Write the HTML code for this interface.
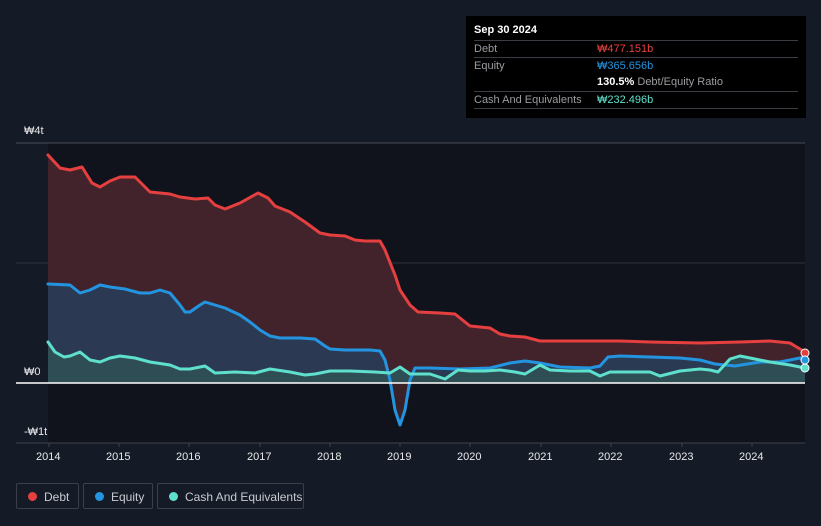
<!DOCTYPE html>
<html><head><meta charset="utf-8"><style>
body{margin:0;width:821px;height:526px;background:#151b26;font-family:"Liberation Sans","Noto Sans CJK KR",sans-serif;overflow:hidden;position:relative}
.tt{position:absolute;left:466px;top:16px;width:340px;height:102px;background:#000;}
.tt .h{position:absolute;left:8px;top:8px;color:#fff;font-size:11px;font-weight:bold}
.row{position:absolute;left:8px;width:324px;border-top:1px solid #3a3d44;font-size:11px;color:#9a9ca0;height:17px;line-height:17px}
.row span{position:absolute;left:123px}
.leg{position:absolute;top:483px;height:26px;border:1px solid #3a3f4a;border-radius:2px;color:#c8cad0;font-size:12px;line-height:26px;box-sizing:border-box}
.leg i{position:absolute;left:11px;top:8px;width:9px;height:9px;border-radius:50%}
.leg b{font-weight:normal;position:absolute;left:27px}
.ax{position:absolute;color:#e8e8ea;font-size:11px}
</style></head><body>
<svg width="821" height="526" style="position:absolute;left:0;top:0">
<rect x="48" y="143" width="757" height="300" fill="#10131b"/>
<line x1="16" y1="143" x2="805" y2="143" stroke="#4a4e57"/>
<line x1="16" y1="263" x2="805" y2="263" stroke="#2e323a"/>
<line x1="16" y1="443" x2="805" y2="443" stroke="#3e424b"/>
<g stroke="#3e424b"><line x1="49" y1="443" x2="49" y2="447"/><line x1="119" y1="443" x2="119" y2="447"/><line x1="189" y1="443" x2="189" y2="447"/><line x1="260" y1="443" x2="260" y2="447"/><line x1="330" y1="443" x2="330" y2="447"/><line x1="400" y1="443" x2="400" y2="447"/><line x1="470" y1="443" x2="470" y2="447"/><line x1="541" y1="443" x2="541" y2="447"/><line x1="611" y1="443" x2="611" y2="447"/><line x1="682" y1="443" x2="682" y2="447"/><line x1="752" y1="443" x2="752" y2="447"/></g>
<polygon fill="#43232b" points="48,155 60,168 70,170 82,167 92,183 100,187 110,181 120,177 135,177 150,192 170,194 180,197 195,199 208,198 215,205 225,209 240,203 258,193 268,198 275,206 290,212 305,222 320,233 330,235 345,236 355,240 365,241 380,241 385,250 395,275 400,290 410,305 418,312 440,313 455,314 470,326 480,327 490,328 500,334 510,336 525,337 540,341 560,341 600,341 620,341 650,342 700,343 740,342 770,341 790,343 805,352 805,383 48,383"/>
<polygon fill="#3a2128" points="385,383 390,383 395,410 400,425 405,410 410,383"/>
<polygon fill="#2b3a52" points="48,284 70,285 80,293 90,290 100,285 110,287 125,289 140,293 150,293 160,290 170,293 180,305 185,312 190,312 200,305 205,302 215,305 225,308 240,315 250,322 260,330 270,336 280,338 300,338 315,339 325,346 330,349 345,350 370,350 380,351 385,360 388,383 48,383"/>
<polygon fill="#2a3a52" points="412,383 415,368 430,368 460,369 490,368 510,363 525,361 540,363 560,367 590,368 600,366 608,357 620,356 650,357 680,358 700,360 715,364 735,366 760,362 780,362 805,357 805,383"/>
<polygon fill="#2f4d55" points="48,342 55,352 64,357 70,356 80,352 90,360 100,362 110,358 120,356 135,358 150,362 170,365 180,369 190,369 205,366 215,373 235,372 255,373 270,369 290,372 305,375 315,374 330,371 350,371 375,372 390,373 400,367 410,374 430,374 445,379 458,370 470,371 485,371 500,370 515,372 525,374 540,365 550,370 570,371 590,371 600,376 610,372 650,372 660,376 680,371 700,369 710,370 718,372 730,359 740,356 750,358 770,362 790,365 805,368 805,383 48,383"/>
<g fill="none" stroke-width="3" stroke-linejoin="round" stroke-linecap="round">
<polyline stroke="#e5403f" points="48,155 60,168 70,170 82,167 92,183 100,187 110,181 120,177 135,177 150,192 170,194 180,197 195,199 208,198 215,205 225,209 240,203 258,193 268,198 275,206 290,212 305,222 320,233 330,235 345,236 355,240 365,241 380,241 385,250 395,275 400,290 410,305 418,312 440,313 455,314 470,326 480,327 490,328 500,334 510,336 525,337 540,341 560,341 600,341 620,341 650,342 700,343 740,342 770,341 790,343 805,352"/>
<polyline stroke="#2394e0" points="48,284 70,285 80,293 90,290 100,285 110,287 125,289 140,293 150,293 160,290 170,293 180,305 185,312 190,312 200,305 205,302 215,305 225,308 240,315 250,322 260,330 270,336 280,338 300,338 315,339 325,346 330,349 345,350 370,350 380,351 385,360 390,380 395,410 400,425 405,410 410,380 415,368 430,368 460,369 490,368 510,363 525,361 540,363 560,367 590,368 600,366 608,357 620,356 650,357 680,358 700,360 715,364 735,366 760,362 780,362 805,357"/>
<polyline stroke="#5ee0cc" points="48,342 55,352 64,357 70,356 80,352 90,360 100,362 110,358 120,356 135,358 150,362 170,365 180,369 190,369 205,366 215,373 235,372 255,373 270,369 290,372 305,375 315,374 330,371 350,371 375,372 390,373 400,367 410,374 430,374 445,379 458,370 470,371 485,371 500,370 515,372 525,374 540,365 550,370 570,371 590,371 600,376 610,372 650,372 660,376 680,371 700,369 710,370 718,372 730,359 740,356 750,358 770,362 790,365 805,368"/>
</g>
<line x1="16" y1="383" x2="805" y2="383" stroke="#fff" stroke-width="1.5"/>
<circle cx="805" cy="353" r="4" fill="#e5403f" stroke="#fff"/>
<circle cx="805" cy="360" r="4" fill="#2394e0" stroke="#fff"/>
<circle cx="805" cy="368" r="4" fill="#5ee0cc" stroke="#fff"/>
</svg>
<div class="ax" style="left:24px;top:125px">₩4t</div>
<div class="ax" style="left:24px;top:366px">₩0</div>
<div class="ax" style="left:24px;top:426px">-₩1t</div>
<div class="ax" style="left:36px;top:451px">2014</div>
<div class="ax" style="left:106px;top:451px">2015</div>
<div class="ax" style="left:176px;top:451px">2016</div>
<div class="ax" style="left:247px;top:451px">2017</div>
<div class="ax" style="left:317px;top:451px">2018</div>
<div class="ax" style="left:387px;top:451px">2019</div>
<div class="ax" style="left:457px;top:451px">2020</div>
<div class="ax" style="left:528px;top:451px">2021</div>
<div class="ax" style="left:598px;top:451px">2022</div>
<div class="ax" style="left:669px;top:451px">2023</div>
<div class="ax" style="left:739px;top:451px">2024</div>
<div class="tt">
<div class="h">Sep 30 2024</div>
<div class="row" style="top:24px">Debt<span style="color:#e5403f">₩477.151b</span></div>
<div class="row" style="top:41px">Equity<span style="color:#2394e0">₩365.656b</span></div>
<div class="row" style="top:58px;border-top:none"><span style="color:#9a9ca0"><b style="color:#fff">130.5%</b> Debt/Equity Ratio</span></div>
<div class="row" style="top:75px">Cash And Equivalents<span style="color:#5ee0cc">₩232.496b</span></div>
<div class="row" style="top:92px;height:0"></div>
</div>
<div class="leg" style="left:16px;width:63px"><i style="background:#e5403f"></i><b>Debt</b></div>
<div class="leg" style="left:83px;width:70px"><i style="background:#2394e0"></i><b>Equity</b></div>
<div class="leg" style="left:157px;width:147px"><i style="background:#5ee0cc"></i><b>Cash And Equivalents</b></div>
</body></html>
